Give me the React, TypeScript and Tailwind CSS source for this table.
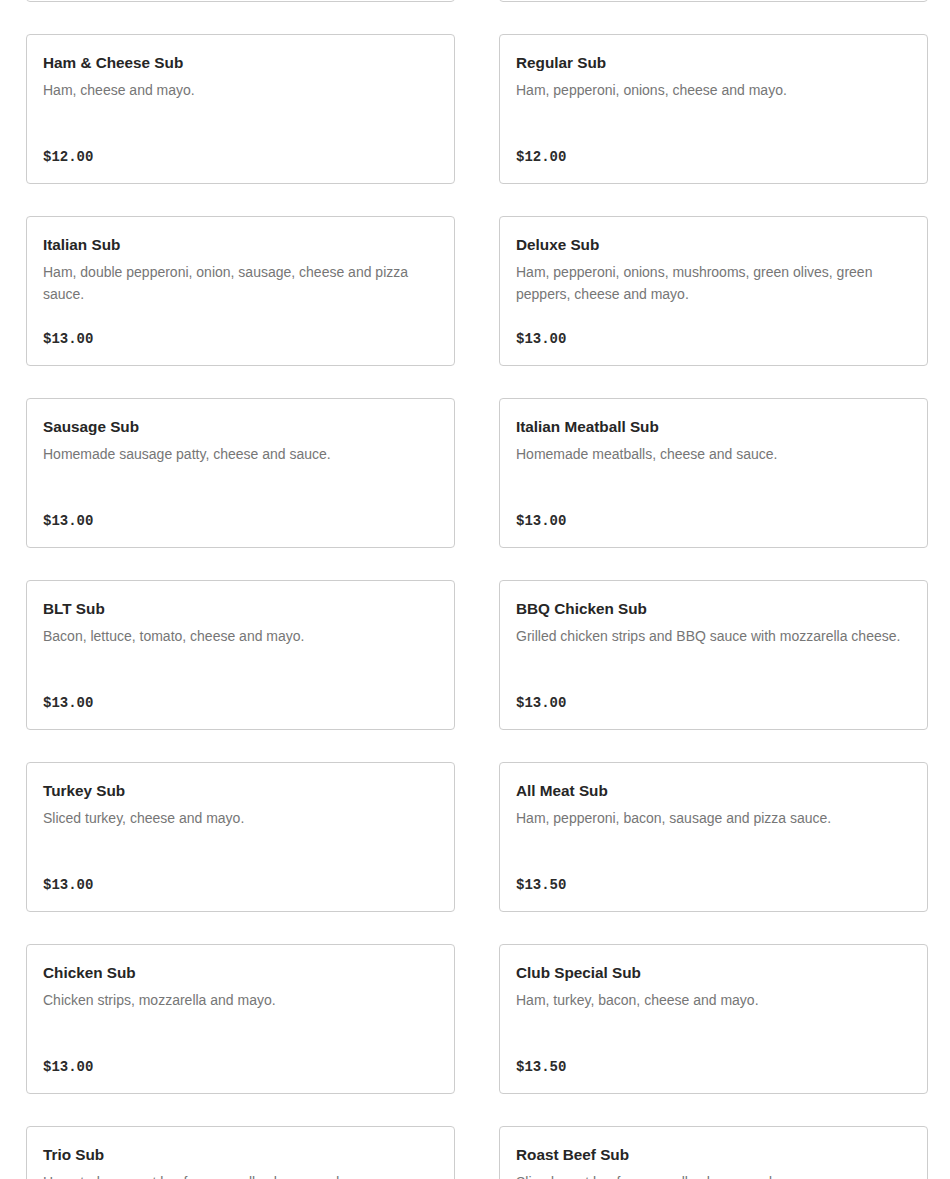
import React from "react";

type Item = { name: string; desc: string; price: string };

const items: Item[] = [
  { name: "Ham & Cheese Sub", desc: "Ham, cheese and mayo.", price: "$12.00" },
  { name: "Regular Sub", desc: "Ham, pepperoni, onions, cheese and mayo.", price: "$12.00" },
  { name: "Italian Sub", desc: "Ham, double pepperoni, onion, sausage, cheese and pizza sauce.", price: "$13.00" },
  { name: "Deluxe Sub", desc: "Ham, pepperoni, onions, mushrooms, green olives, green peppers, cheese and mayo.", price: "$13.00" },
  { name: "Sausage Sub", desc: "Homemade sausage patty, cheese and sauce.", price: "$13.00" },
  { name: "Italian Meatball Sub", desc: "Homemade meatballs, cheese and sauce.", price: "$13.00" },
  { name: "BLT Sub", desc: "Bacon, lettuce, tomato, cheese and mayo.", price: "$13.00" },
  { name: "BBQ Chicken Sub", desc: "Grilled chicken strips and BBQ sauce with mozzarella cheese.", price: "$13.00" },
  { name: "Turkey Sub", desc: "Sliced turkey, cheese and mayo.", price: "$13.00" },
  { name: "All Meat Sub", desc: "Ham, pepperoni, bacon, sausage and pizza sauce.", price: "$13.50" },
  { name: "Chicken Sub", desc: "Chicken strips, mozzarella and mayo.", price: "$13.00" },
  { name: "Club Special Sub", desc: "Ham, turkey, bacon, cheese and mayo.", price: "$13.50" },
  { name: "Trio Sub", desc: "Ham, turkey, roast beef, mozzarella cheese and mayo.", price: "$13.50" },
  { name: "Roast Beef Sub", desc: "Sliced roast beef, mozzarella cheese and mayo.", price: "$13.50" },
];

function Card({ item }: { item: Item }) {
  return (
    <div className="flex h-[150px] flex-col rounded-[4px] border border-[#cdcdcd] bg-white px-4 pt-4 pb-[14px]">
      <div className="text-[15.3px] font-bold leading-6 text-[#262626] [font-family:'Liberation_Sans',Arial,sans-serif]">
        {item.name}
      </div>
      <div className="mt-1 min-h-[44px] text-[14px] leading-[22px] text-[#767676] [font-family:'Liberation_Sans',Arial,sans-serif]">
        {item.desc}
      </div>
      <div className="mt-auto text-[14px] font-bold leading-6 text-[#2b2b2b] [font-family:'Liberation_Mono','Courier_New',monospace]">
        {item.price}
      </div>
    </div>
  );
}

export default function App() {
  return (
    <div className="h-[1179px] overflow-hidden bg-white">
      <div className="mt-[-148px] grid grid-cols-2 gap-x-[44px] gap-y-8 pl-[26px] pr-[22px]">
        <div className="h-[150px] rounded-[4px] border border-[#cdcdcd] bg-white" />
        <div className="h-[150px] rounded-[4px] border border-[#cdcdcd] bg-white" />
        {items.map((it) => (
          <Card key={it.name} item={it} />
        ))}
      </div>
    </div>
  );
}
